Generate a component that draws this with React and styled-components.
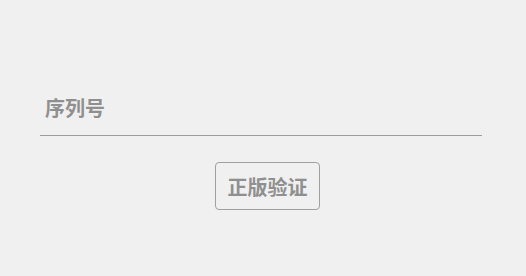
import React from "react";
import styled, { createGlobalStyle } from "styled-components";

const Global = createGlobalStyle`
  html, body { margin: 0; padding: 0; background: #f0f0f0; }
  body { font-family: "Noto Sans CJK SC", "Noto Sans", sans-serif; }
`;

const Page = styled.div`
  width: 526px;
  height: 276px;
  box-sizing: border-box;
  padding: 92px 44px 0 40px;
  display: flex;
  flex-direction: column;
`;

const Field = styled.label`
  display: flex;
  align-items: center;
  height: 31px;
  padding: 0 0 12px 5px;
  border-bottom: 1px solid #9c9c9c;
`;

const Input = styled.input`
  flex: 1;
  border: none;
  outline: none;
  background: transparent;
  font-family: inherit;
  font-size: 20px;
  font-weight: 700;
  color: #8c8c8c;
  padding: 0;
  &::placeholder { color: #8f8f8f; }
`;

const ButtonRow = styled.div`
  display: flex;
  justify-content: center;
  padding-left: 13px;
  margin-top: 26px;
`;

const VerifyButton = styled.button`
  width: 105px;
  height: 48px;
  box-sizing: border-box;
  border: 1px solid #a0a0a0;
  border-radius: 4px;
  background: #f0f0f0;
  font-family: inherit;
  font-size: 20px;
  font-weight: 700;
  color: #8f8f8f;
  padding: 0;
  cursor: pointer;
`;

export default function App() {
  return (
    <>
      <Global />
      <Page>
        <Field>
          <Input placeholder="序列号" />
        </Field>
        <ButtonRow>
          <VerifyButton>正版验证</VerifyButton>
        </ButtonRow>
      </Page>
    </>
  );
}
